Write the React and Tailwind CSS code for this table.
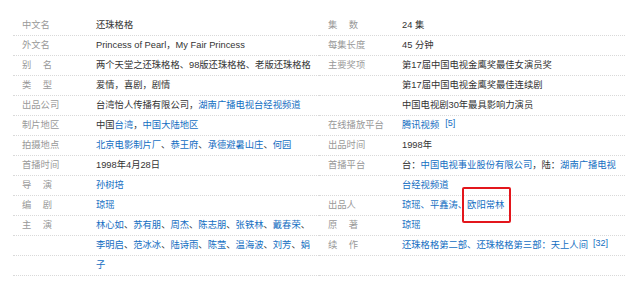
import React from "react";

const L = ({ children }) => <span className="text-[#136ec2]">{children}</span>;
const Sup = ({ children, cls }) => (
  <sup className={"text-[#136ec2] text-[9px] relative -top-[2px] " + (cls || "ml-[6px]")}>{children}</sup>
);

function Label({ text }) {
  if (!text) return <div className="w-[83px] shrink-0" />;
  if (Array.isArray(text)) {
    return (
      <div className="w-[83px] shrink-0 pl-[9px] text-[#999] flex gap-[11.4px]">
        <span>{text[0]}</span>
        <span>{text[1]}</span>
      </div>
    );
  }
  return <div className="w-[83px] shrink-0 pl-[9px] text-[#999]">{text}</div>;
}

function Row({ label, children }) {
  return (
    <div className="flex items-center h-[20px] border-b border-dotted border-[#d9d9d9] whitespace-nowrap">
      <Label text={label} />
      <div className="text-[#333] flex items-center h-full">{children}</div>
    </div>
  );
}

export default function App() {
  return (
    <div
      className="w-[640px] h-[287px] bg-white pt-[16px] pl-[13px] flex text-[9.3px] leading-[19px] overflow-hidden"
      style={{ fontFamily: '"Liberation Sans", "Noto Sans CJK SC", sans-serif' }}
    >
      <div className="w-[306px] shrink-0">
        <Row label="中文名">还珠格格</Row>
        <Row label="外文名">Princess of Pearl，My Fair Princess</Row>
        <Row label={["别", "名"]}>两个天堂之还珠格格、98版还珠格格、老版还珠格格</Row>
        <Row label={["类", "型"]}>爱情，喜剧，剧情</Row>
        <Row label="出品公司">
          <span>
            台湾怡人传播有限公司，<L>湖南广播电视台经视频道</L>
          </span>
        </Row>
        <Row label="制片地区">
          <span>
            中国<L>台湾</L>，<L>中国大陆地区</L>
          </span>
        </Row>
        <Row label="拍摄地点">
          <span>
            <L>北京电影制片厂</L>、<L>恭王府</L>、<L>承德避暑山庄</L>、<L>何园</L>
          </span>
        </Row>
        <Row label="首播时间">1998年4月28日</Row>
        <Row label={["导", "演"]}>
          <L>孙树培</L>
        </Row>
        <Row label={["编", "剧"]}>
          <L>琼瑶</L>
        </Row>
        <Row label={["主", "演"]}>
          <span>
            <L>林心如</L>、<L>苏有朋</L>、<L>周杰</L>、<L>陈志朋</L>、<L>张铁林</L>、<L>戴春荣</L>、
          </span>
        </Row>
        <Row>
          <span>
            <L>李明启</L>、<L>范冰冰</L>、<L>陆诗雨</L>、<L>陈莹</L>、<L>温海波</L>、<L>刘芳</L>、<L>娟</L>
          </span>
        </Row>
        <Row>
          <L>子</L>
        </Row>
      </div>
      <div className="w-[306px] shrink-0">
        <Row label={["集", "数"]}>24 集</Row>
        <Row label="每集长度">45 分钟</Row>
        <Row label="主要奖项">第17届中国电视金鹰奖最佳女演员奖</Row>
        <Row>第17届中国电视金鹰奖最佳连续剧</Row>
        <Row>中国电视剧30年最具影响力演员</Row>
        <Row label="在线播放平台">
          <span>
            <L>腾讯视频</L>
            <Sup>[5]</Sup>
          </span>
        </Row>
        <Row label="出品时间">1998年</Row>
        <Row label="首播平台">
          <span>
            台：<L>中国电视事业股份有限公司</L>，陆：<L>湖南广播电视</L>
          </span>
        </Row>
        <Row>
          <L>台经视频道</L>
        </Row>
        <Row label="出品人">
          <span className="text-[#136ec2]">
            琼瑶、平鑫涛、
            <span className="relative inline-block">
              欧阳常林
              <span className="absolute -left-[5px] -right-[7px] -top-[9px] -bottom-[8px] border-2 border-[#e3161c] rounded-[2px]" />
            </span>
          </span>
        </Row>
        <Row label={["原", "著"]}>
          <L>琼瑶</L>
        </Row>
        <Row label={["续", "作"]}>
          <span>
            <L>还珠格格第二部、还珠格格第三部：天上人间</L>
            <Sup cls="ml-[5px]">[32]</Sup>
          </span>
        </Row>
        <Row />
      </div>
    </div>
  );
}
